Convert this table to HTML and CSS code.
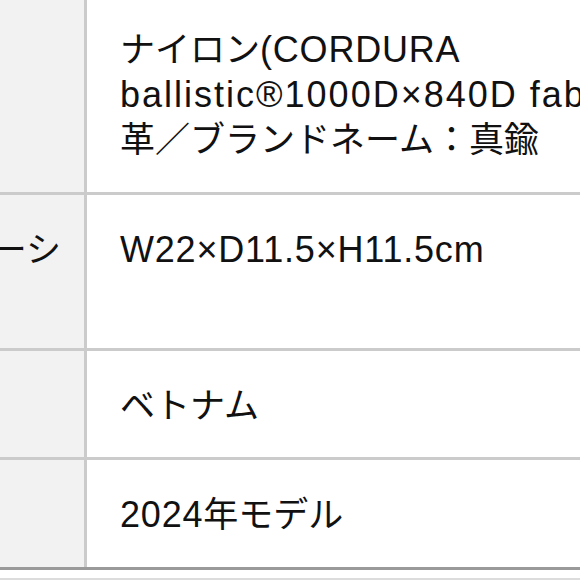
FILE: index.html
```html
<!DOCTYPE html>
<html lang="ja">
<head>
<meta charset="utf-8">
<title>仕様</title>
<link rel="stylesheet" href="styles.css">
</head>
<body>
<div class="spec">
  <div class="row">
    <div class="th"></div>
    <div class="td"><span class="ja">ナイロン</span>(CORDURA<br><span class="wide">ballistic®1000D×840D fabric)</span><br><span class="ja">革／ブランドネーム：真鍮</span></div>
  </div>
  <div class="row row-tall">
    <div class="th"><span class="ja">ーシ</span></div>
    <div class="td">W22×D11.5×H11.5cm</div>
  </div>
  <div class="row">
    <div class="th"></div>
    <div class="td"><span class="ja">ベトナム</span></div>
  </div>
  <div class="row">
    <div class="th"></div>
    <div class="td">2024<span class="ja">年モデル</span></div>
  </div>
</div>
<div class="next"></div>
</body>
</html>
```
FILE: styles.css
```css
html, body {
  margin: 0;
  padding: 0;
  background: #ffffff;
  overflow: hidden;
}

.spec {
  width: 820px;
  margin: -5px 0 0 -93px;
  border-bottom: 3px solid #9a9a9a;
  color: #111111;
  font-family: "Liberation Sans", "Noto Sans CJK JP", sans-serif;
  font-size: 36px;
  line-height: 45px;
  letter-spacing: 0.8px;
}

.row {
  display: grid;
  grid-template-columns: 180px 1fr;
  border-top: 3px solid #cbcbcb;
}

.row:first-child {
  border-top: 0;
}

.th {
  background: #f2f2f2;
  border-right: 3px solid #cbcbcb;
  text-align: right;
  padding: 32px 23px 29.5px 0;
  white-space: nowrap;
}

.td {
  padding: 32px 0 29.5px 33px;
  white-space: nowrap;
}

.row-tall .td {
  padding-bottom: 76px;
}

.wide {
  letter-spacing: 2px;
}

.ja {
  font-family: "Noto Sans CJK JP", sans-serif;
  font-size: 35px;
  line-height: 1;
  letter-spacing: 0;
}

.next {
  margin-top: 8.5px;
  border-top: 2px solid #dcdcdc;
}
```
